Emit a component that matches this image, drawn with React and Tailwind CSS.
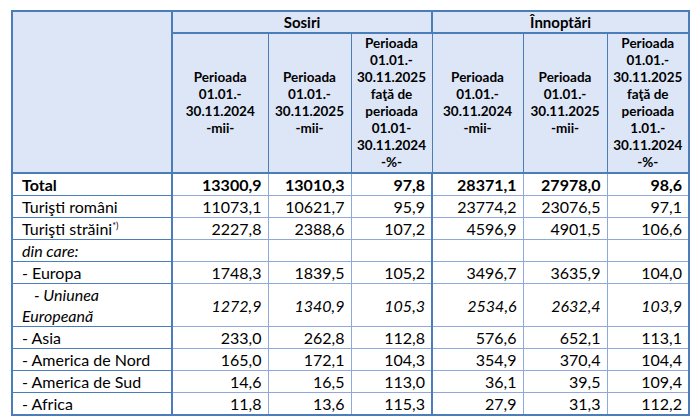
const rows = [
  { label: "Total", vals: ["13300,9", "13010,3", "97,8", "28371,1", "27978,0", "98,6"], bold: true },
  { label: "Turişti români", vals: ["11073,1", "10621,7", "95,9", "23774,2", "23076,5", "97,1"] },
  { label: "Turişti străini", sup: "*)", vals: ["2227,8", "2388,6", "107,2", "4596,9", "4901,5", "106,6"] },
  { label: "din care:", vals: ["", "", "", "", "", ""], italic: true },
  { label: "- Europa", vals: ["1748,3", "1839,5", "105,2", "3496,7", "3635,9", "104,0"] },
  { label: "eu", vals: ["1272,9", "1340,9", "105,3", "2534,6", "2632,4", "103,9"], italic: true, tall: true },
  { label: "- Asia", vals: ["233,0", "262,8", "112,8", "576,6", "652,1", "113,1"] },
  { label: "- America de Nord", vals: ["165,0", "172,1", "104,3", "354,9", "370,4", "104,4"] },
  { label: "- America de Sud", vals: ["14,6", "16,5", "113,0", "36,1", "39,5", "109,4"] },
  { label: "- Africa", vals: ["11,8", "13,6", "115,3", "27,9", "31,3", "112,2"] },
];

function PeriodHead({ year }) {
  return (
    <th className="border border-[#4a7dba] bg-[#dde6f7] align-middle text-center font-bold leading-[17px] text-[13.5px]">
      Perioada
      <br />
      01.01.-
      <br />
      30.11.{year}
      <br />
      -mii-
    </th>
  );
}

function CompareHead({ from }) {
  return (
    <th className="border border-[#4a7dba] bg-[#dde6f7] align-middle text-center font-bold leading-[17px] text-[13.5px]">
      Perioada
      <br />
      01.01.-
      <br />
      30.11.2025
      <br />
      faţă de
      <br />
      perioada
      <br />
      {from}
      <br />
      30.11.2024
      <br />
      -%-
    </th>
  );
}

export default function App() {
  return (
    <div className="w-[700px] h-[420px] overflow-hidden bg-white pl-[11px] pt-[10px] text-black" style={{ fontFamily: "Lato, 'Open Sans', sans-serif" }}>
      <table className="table-fixed border-collapse border-2 border-[#4a7dba] w-[677px]">
        <colgroup>
          <col className="w-[160px]" />
          <col className="w-[96px]" />
          <col className="w-[83px]" />
          <col className="w-[81px]" />
          <col className="w-[91px]" />
          <col className="w-[84px]" />
          <col className="w-[82px]" />
        </colgroup>
        <thead>
          <tr className="h-[22px]">
            <th rowSpan={2} className="border-2 border-[#4a7dba] bg-[#dde6f7]"></th>
            <th colSpan={3} className="border-2 border-[#4a7dba] bg-[#dde6f7] text-center text-[15px] font-bold leading-[20px]">
              Sosiri
            </th>
            <th colSpan={3} className="border-2 border-[#4a7dba] bg-[#dde6f7] text-center text-[15px] font-bold leading-[20px]">
              Înnoptări
            </th>
          </tr>
          <tr className="h-[140px] border-b-2 border-[#4a7dba]">
            <PeriodHead year="2024" />
            <PeriodHead year="2025" />
            <CompareHead from="01.01-" />
            <PeriodHead year="2024" />
            <PeriodHead year="2025" />
            <CompareHead from="1.01.-" />
          </tr>
        </thead>
        <tbody>
          {rows.map((r, i) => (
            <tr key={i} className={r.tall ? "h-[43px]" : "h-[22px]"}>
              <td className={`border border-[#4a7dba] border-r-2 pl-[9px] text-[16px] leading-[21px] ${r.bold ? "font-bold" : ""} ${r.italic ? "italic" : ""}`}>
                {r.label === "eu" ? (
                  <>
                    <span className="pl-[12px]">- Uniunea</span>
                    <br />
                    Europeană
                  </>
                ) : (
                  <>
                    {r.label}
                    {r.sup && <span className="text-[9px] align-[6px] leading-none">{r.sup}</span>}
                  </>
                )}
              </td>
              {r.vals.map((v, j) => (
                <td
                  key={j}
                  className={`border border-[#8eaadb] ${j === 2 ? "border-r-[#4a7dba] border-r-2" : ""} pr-[6px] text-right text-[16px] leading-[21px] ${r.bold ? "font-bold" : ""} ${r.italic ? "italic" : ""}`}
                >
                  {v}
                </td>
              ))}
            </tr>
          ))}
        </tbody>
      </table>
      <p className="pl-[20px] pt-[2px] text-[11px] leading-[14px] text-[#5a7fc4] whitespace-nowrap">
        *) Sosirile turiştilor străini în structurile de primire turistică
      </p>
    </div>
  );
}
